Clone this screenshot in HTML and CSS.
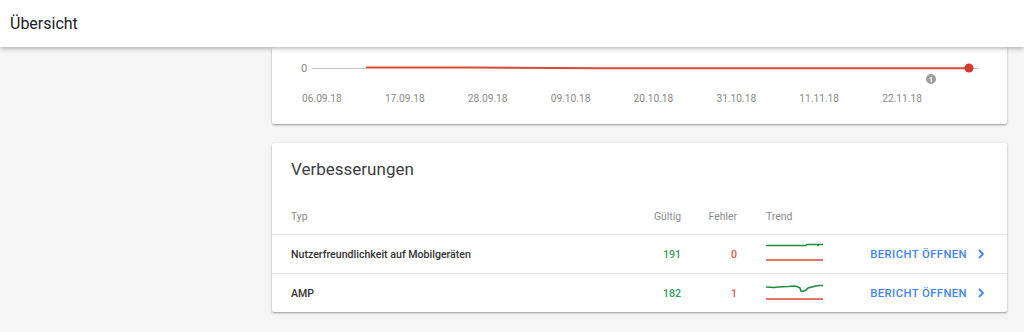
FILE: index.html
```html
<!DOCTYPE html>
<html>
<head>
<meta charset="utf-8">
<title>Übersicht</title>
<link rel="stylesheet" href="styles.css">
</head>
<body>

<header class="topbar">
	<h1 class="topbar-title">Übersicht</h1>
</header>

<div class="layout">
	<aside class="sidebar"></aside>

	<main class="content">

		<section class="card chart-card">
			<svg class="chart" width="735" height="39" viewBox="0 0 735 39">
				<text x="29" y="25" class="axis-label">0</text>
				<line x1="40" y1="21.5" x2="94" y2="21.5" stroke="#c4c4c4" stroke-width="1"/>
				<line x1="697" y1="21.5" x2="706" y2="21.5" stroke="#c4c4c4" stroke-width="1"/>
				<polyline points="94,20.5 198,20.5 330,21.3 697,21.3" fill="none" stroke="#d9483b" stroke-width="2"/>
				<circle cx="697" cy="21" r="4.5" fill="#d23a2c"/>
				<circle cx="659" cy="32" r="5" fill="#9e9e9e"/>
				<text x="659" y="34.6" class="badge-label">1</text>
			</svg>
			<div class="dates">
				<span>06.09.18</span>
				<span>17.09.18</span>
				<span>28.09.18</span>
				<span>09.10.18</span>
				<span>20.10.18</span>
				<span>31.10.18</span>
				<span>11.11.18</span>
				<span>22.11.18</span>
			</div>
		</section>

		<section class="card">
			<h2 class="card-title">Verbesserungen</h2>

			<div class="row head">
				<span>Typ</span>
				<span class="num">Gültig</span>
				<span class="num">Fehler</span>
				<span class="trend">Trend</span>
				<span></span>
			</div>

			<div class="row">
				<span class="name">Nutzerfreundlichkeit auf Mobilgeräten</span>
				<span class="num valid">191</span>
				<span class="num error">0</span>
				<span class="trend">
					<svg width="57" height="38" viewBox="0 0 57 38">
						<polyline points="0,10.5 40,10.5 41,9.5 51,9.5 52,10.5 52.5,9.5 57,9.5" fill="none" stroke="#1e8e3e" stroke-width="1.6"/>
						<line x1="0" y1="25" x2="57" y2="25" stroke="#d9483b" stroke-width="1.6"/>
					</svg>
				</span>
				<a class="open-link" href="#">BERICHT ÖFFNEN
					<svg width="8" height="10" viewBox="0 0 8 10"><polyline points="2,1 6,5 2,9" fill="none" stroke="#4285f4" stroke-width="1.8"/></svg>
				</a>
			</div>

			<div class="row">
				<span class="name">AMP</span>
				<span class="num valid">182</span>
				<span class="num error">1</span>
				<span class="trend">
					<svg width="57" height="38" viewBox="0 0 57 38">
						<polyline points="0,13 8,13.5 12,13 22,12.5 28,12 31,12.5 34,14 35,17 37,17.3 40,16 42,14 46,13 50,12 53,11.5 57,11.5" fill="none" stroke="#1e8e3e" stroke-width="1.6"/>
						<line x1="0" y1="25" x2="57" y2="25" stroke="#d9483b" stroke-width="1.6"/>
					</svg>
				</span>
				<a class="open-link" href="#">BERICHT ÖFFNEN
					<svg width="8" height="10" viewBox="0 0 8 10"><polyline points="2,1 6,5 2,9" fill="none" stroke="#4285f4" stroke-width="1.8"/></svg>
				</a>
			</div>
		</section>

	</main>
</div>

</body>
</html>
```

FILE: styles.css
```css
body {
	margin : 0;
	background-color : #f5f5f5;
	font-family : Roboto, "Liberation Sans", sans-serif;
	color : #212121;
	height : 332px;
	overflow : hidden;
}

.topbar {
	position : relative;
	z-index : 2;
	height : 47px;
	background-color : #fff;
	box-shadow : 0 2px 4px rgba(0,0,0,0.25);
	display : flex;
	align-items : center;
	padding-left : 10px;
}

.topbar-title {
	margin : 0;
	font-size : 16px;
	font-weight : 400;
	color : #202124;
}

.layout {
	display : flex;
}

.sidebar {
	width : 256px;
	flex-shrink : 0;
}

.content {
	padding : 0 17px 0 16px;
}

.card {
	width : 735px;
	background-color : #fff;
	border-radius : 2px;
	box-shadow : 0 1px 2px rgba(0,0,0,0.3), 0 1px 3px rgba(0,0,0,0.1);
	margin-top : 19px;
}

.chart-card {
	margin-top : 0;
	padding-bottom : 17px;
}

.chart {
	display : block;
}

.axis-label {
	font-family : Roboto, sans-serif;
	font-size : 11px;
	fill : #8a8a8a;
}

.badge-label {
	font-family : Roboto, sans-serif;
	font-size : 7.5px;
	font-weight : 700;
	fill : #fff;
	text-anchor : middle;
}

.dates {
	display : flex;
	padding-left : 30px;
	margin-top : 5px;
	font-size : 10.2px;
	line-height : 16px;
	color : #8a8a8a;
}

.dates span {
	width : 82.9px;
}

.card-title {
	margin : 0;
	padding : 14px 19px 0 19px;
	font-size : 17px;
	line-height : 24px;
	font-weight : 400;
	color : #3c4043;
}

.row {
	display : grid;
	grid-template-columns : 1fr 60px 56px 86px 162px;
	align-items : center;
	height : 38px;
	padding : 0 22px 0 19px;
	border-top : 1px solid #e6e6e6;
	font-size : 10.6px;
	font-weight : 500;
}

.row.head {
	height : 35px;
	margin-top : 14px;
	padding-top : 4px;
	padding-bottom : 0;
	border-top : none;
	color : #8a8a8a;
	font-size : 10.4px;
	font-weight : 400;
}

.name {
	color : #333;
}

.num {
	text-align : right;
}

.valid {
	color : #34a05a;
}

.error {
	color : #e0584b;
}

.trend {
	padding-left : 29px;
	height : 100%;
	display : flex;
	align-items : center;
}

.row.head .trend {
	height : auto;
}

.open-link {
	justify-self : end;
	display : flex;
	align-items : center;
	gap : 10px;
	color : #4285f4;
	text-decoration : none;
	font-size : 11.3px;
	font-weight : 500;
	letter-spacing : 0.4px;
}
```
